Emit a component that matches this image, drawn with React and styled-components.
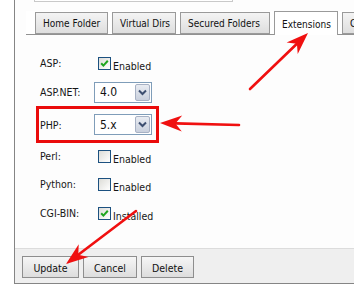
import React from "react";
import styled, { createGlobalStyle } from "styled-components";

const Global = createGlobalStyle`
  html, body { margin: 0; padding: 0; background: #ffffff; overflow: hidden; }
  body { font-family: "DejaVu Sans Condensed", "DejaVu Sans", sans-serif; font-size: 10px; color: #1a1a1a; }
  #root { width: 354px; height: 298px; position: relative; overflow: hidden; }
`;

const Page = styled.div`
  width: 354px;
  height: 298px;
  position: relative;
  overflow: hidden;
`;

const Panel = styled.div`
  margin-left: 14px;
  width: 420px;
  border-left: 1px solid #858585;
  border-bottom: 1px solid #858585;
  display: flex;
  flex-direction: column;
  background: #fdfdfd;
`;

const TopBox = styled.div`
  margin-left: 19px;
  width: 197px;
  height: 1px;
  border: 1px solid #c9c9c9;
  border-top: none;
  background: #fff;
`;

const TabBar = styled.div`
  margin-top: 9px;
  margin-left: 11px;
  padding-left: 9px;
  display: flex;
  align-items: flex-end;
  gap: 4px;
  border-bottom: 1px solid #919191;
  height: 23px;
  background: #fff;
`;

const Tab = styled.div`
  box-sizing: border-box;
  width: ${(p) => p.w}px;
  height: ${(p) => (p.active ? 24 : 22)}px;
  margin-bottom: ${(p) => (p.active ? -1 : 0)}px;
  border: 1px solid #9a9a9a;
  border-bottom: ${(p) => (p.active ? "none" : "1px solid #9a9a9a")};
  background: ${(p) =>
    p.active ? "#ffffff" : "linear-gradient(#f4f4f4, #dedede)"};
  display: flex;
  align-items: center;
  padding-left: 7px;
  padding-top: ${(p) => (p.active ? 1 : 0)}px;
  white-space: nowrap;
  overflow: hidden;
  font-size: 10px;
  color: #111;
`;

const Content = styled.div`
  padding: 13px 0 21px 25px;
  display: flex;
  flex-direction: column;
  background: #fdfdfd;
`;

const Row = styled.div`
  height: ${(p) => p.h}px;
  display: flex;
  align-items: center;
`;

const Highlight = styled.div`
  margin-left: -4px;
  width: 123px;
  box-sizing: border-box;
  height: 37px;
  border: 3px solid #ea0b0b;
  padding-left: 1px;
  display: flex;
  align-items: center;
`;

const Label = styled.div`
  width: 54px;
  font-size: 10.5px;
  color: #161616;
`;

const CheckWrap = styled.div`
  display: flex;
  align-items: flex-end;
  margin-left: 4px;
  gap: 2px;
`;

const Box = styled.div`
  width: 13px;
  height: 13px;
  box-sizing: border-box;
  border: 1px solid #1c5180;
  background: linear-gradient(135deg, #dcdcd7, #ffffff);
  display: flex;
  align-items: center;
  justify-content: center;
`;

const CheckText = styled.span`
  font-size: 10.5px;
  color: #161616;
  position: relative;
  top: 2px;
`;

const Select = styled.div`
  width: 58px;
  height: 21px;
  box-sizing: border-box;
  border: 1px solid #7f9db9;
  background: #fff;
  display: flex;
  align-items: center;
  justify-content: space-between;
  padding: 0 1px 0 5px;
  font-size: 12px;
  color: #111;
`;

const DropBtn = styled.div`
  width: 15px;
  height: 17px;
  box-sizing: border-box;
  border: 1px solid #a7b1c4;
  border-radius: 2px;
  background: linear-gradient(#e9ecf2, #c9d0dd);
  display: flex;
  align-items: center;
  justify-content: center;
`;

const Footer = styled.div`
  border-top: 1px solid #dcdcdc;
  background: #efefef;
  height: 35px;
  box-sizing: border-box;
  padding: 7px 0 0 7px;
  display: flex;
  gap: 4px;
`;

const Button = styled.button`
  width: ${(p) => p.w}px;
  height: 22px;
  box-sizing: border-box;
  border: 1px solid #8e8e8e;
  background: linear-gradient(#f6f6f6, #dddddd);
  font-family: "DejaVu Sans Condensed", "DejaVu Sans", sans-serif;
  font-size: 10.5px;
  color: #111;
  padding: 0;
  padding-top: 2px;
`;

const Overlay = styled.svg`
  position: absolute;
  left: 0;
  top: 0;
  pointer-events: none;
`;

function Check({ on }) {
  return (
    <Box>
      {on && (
        <svg width="9" height="9" viewBox="0 0 9 9">
          <path d="M1.2 4.2 L3.4 6.6 L7.8 1.8" fill="none" stroke="#1fa51f" strokeWidth="2" />
        </svg>
      )}
    </Box>
  );
}

function Checkbox({ on, text }) {
  return (
    <CheckWrap>
      <Check on={on} />
      <CheckText>{text}</CheckText>
    </CheckWrap>
  );
}

function Dropdown({ value }) {
  return (
    <Select>
      <span>{value}</span>
      <DropBtn>
        <svg width="9" height="7" viewBox="0 0 9 7">
          <path d="M1 1.5 L4.5 5 L8 1.5" fill="none" stroke="#3d4f70" strokeWidth="2" />
        </svg>
      </DropBtn>
    </Select>
  );
}

function arrow(tx, ty, sx, sy, L = 22, w = 8) {
  const dx = tx - sx;
  const dy = ty - sy;
  const len = Math.hypot(dx, dy);
  const ux = dx / len;
  const uy = dy / len;
  const nx = -uy;
  const ny = ux;
  const bx = tx - ux * L;
  const by = ty - uy * L;
  const kx = tx - ux * L * 0.7;
  const ky = ty - uy * L * 0.7;
  const head = `M${tx} ${ty} L${bx + nx * w} ${by + ny * w} L${kx} ${ky} L${bx - nx * w} ${by - ny * w} Z`;
  return { head, line: { x1: sx, y1: sy, x2: kx, y2: ky } };
}

const arrows = [arrow(308, 33, 250, 89), arrow(160, 123, 239, 125), arrow(66, 264, 136, 211)];

export default function App() {
  return (
    <Page>
      <Global />
      <Panel>
        <TopBox />
        <TabBar>
          <Tab w={73}>Home Folder</Tab>
          <Tab w={64}>Virtual Dirs</Tab>
          <Tab w={90}>Secured Folders</Tab>
          <Tab w={64} active>
            Extensions
          </Tab>
          <Tab w={64}>Custom Errors</Tab>
        </TabBar>
        <Content>
          <Row h={30}>
            <Label>ASP:</Label>
            <Checkbox on text="Enabled" />
          </Row>
          <Row h={28}>
            <Label>ASP.NET:</Label>
            <Dropdown value="4.0" />
          </Row>
          <Highlight>
            <Label>PHP:</Label>
            <Dropdown value="5.x" />
          </Highlight>
          <Row h={26}>
            <Label>Perl:</Label>
            <Checkbox text="Enabled" />
          </Row>
          <Row h={30}>
            <Label>Python:</Label>
            <Checkbox text="Enabled" />
          </Row>
          <Row h={28}>
            <Label>CGI-BIN:</Label>
            <Checkbox on text="Installed" />
          </Row>
        </Content>
        <Footer>
          <Button w={57}>Update</Button>
          <Button w={54}>Cancel</Button>
          <Button w={53}>Delete</Button>
        </Footer>
      </Panel>
      <Overlay width="354" height="298" viewBox="0 0 354 298">
        {arrows.map((a, i) => (
          <g key={i}>
            <line {...a.line} stroke="#f01010" strokeWidth="2.6" strokeLinecap="round" />
            <path d={a.head} fill="#f01010" />
          </g>
        ))}
      </Overlay>
    </Page>
  );
}
